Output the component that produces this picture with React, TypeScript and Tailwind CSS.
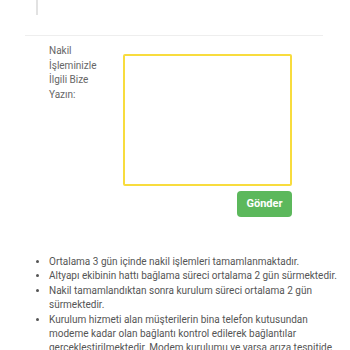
import React from "react";

export default function App() {
  const items = [
    "Ortalama 3 gün içinde nakil işlemleri tamamlanmaktadır.",
    "Altyapı ekibinin hattı bağlama süreci ortalama 2 gün sürmektedir.",
    "Nakil tamamlandıktan sonra kurulum süreci ortalama 2 gün sürmektedir.",
    "Kurulum hizmeti alan müşterilerin bina telefon kutusundan modeme kadar olan bağlantı kontrol edilerek bağlantılar gerçekleştirilmektedir. Modem kurulumu ve varsa arıza tespitide yapılmaktadır.",
  ];
  return (
    <div className="w-[350px] h-[350px] overflow-hidden bg-white" style={{ fontFamily: "Roboto, 'Noto Sans', sans-serif" }}>
      <div className="ml-[36px] w-[1.5px] h-[15px] bg-[#e2e2e2]" />
      <div className="ml-[25px] mt-[20px] w-[298px] h-px bg-[#eeeeee]" />
      <div className="flex ml-[49px] mt-[8px]">
        <div className="w-[74px] text-[10px] leading-[14.5px] text-[#666]">
          Nakil
          <br />
          İşleminizle
          <br />
          İlgili Bize
          <br />
          Yazın:
        </div>
        <div className="flex flex-col items-end">
          <div className="mt-[10px] w-[169px] h-[132px] border-2 border-[#f8dc3e] rounded-[2px] bg-white" />
          <button className="mt-[5px] w-[55px] h-[26px] rounded-[4px] bg-[#5cb85c] text-white text-[11px] font-bold">
            Gönder
          </button>
        </div>
      </div>
      <ul className="list-disc mt-[38px] ml-[49px] w-[290px] text-[10px] leading-[14.4px] text-[#555]">
        {items.map((t) => (
          <li key={t}>{t}</li>
        ))}
      </ul>
    </div>
  );
}
